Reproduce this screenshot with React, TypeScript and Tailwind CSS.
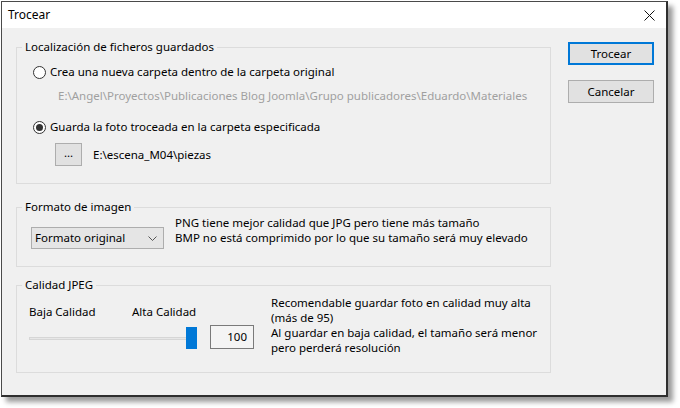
import React from "react";

const font = { fontFamily: '"Noto Sans", "Open Sans", sans-serif' };

const Radio = ({ checked }: { checked?: boolean }) => (
  <span className="flex h-[13px] w-[13px] shrink-0 items-center justify-center rounded-full border border-[#333333] bg-white">
    {checked && <span className="h-[7px] w-[7px] rounded-full bg-[#333333]"></span>}
  </span>
);

const GroupBox = ({
  title,
  className,
  children,
}: {
  title: string;
  className: string;
  children: React.ReactNode;
}) => (
  <fieldset className={`w-[535px] border border-[#dcdcdc] ${className}`}>
    <legend className="ml-[5px] px-[3px] leading-[16px]">{title}</legend>
    {children}
  </fieldset>
);

export default function App() {
  return (
    <div
      className="h-[408px] w-[680px] overflow-hidden bg-white pl-px pt-px text-[11.5px] text-black"
      style={font}
    >
      <div className="flex h-[396px] w-[667px] flex-col border border-[#4a4a4a] border-b-2 border-r-2 border-b-[#2e2e2e] border-r-[#2e2e2e] shadow-[5px_5px_5px_0px_rgba(0,0,0,0.4)]">
        {/* Title bar */}
        <div className="flex h-[26px] items-center justify-between bg-white pl-[6px] pr-[11px]">
          <span className="text-[12px]">Trocear</span>
          <svg width="11" height="11" viewBox="0 0 11 11" className="mt-[1px]">
            <path d="M0.5 0.5 L10.5 10.5 M10.5 0.5 L0.5 10.5" stroke="#111" strokeWidth="1" />
          </svg>
        </div>

        {/* Body */}
        <div className="flex flex-1 bg-[#f0f0f0] pl-[14px]">
          <div className="flex flex-col pt-[11px]">
            {/* Localización */}
            <GroupBox title="Localización de ficheros guardados" className="h-[145px]">
              <div className="flex flex-col pl-[16px]">
                <div className="mt-[9px] flex h-[16px] items-center gap-[4px]">
                  <Radio />
                  <span>Crea una nueva carpeta dentro de la carpeta original</span>
                </div>
                <div className="mt-[8px] h-[16px] pl-[25px] leading-[16px] text-[#a0a0a0]">
                  E:\Angel\Proyectos\Publicaciones Blog Joomla\Grupo publicadores\Eduardo\Materiales
                </div>
                <div className="mt-[15px] flex h-[16px] items-center gap-[4px]">
                  <Radio checked />
                  <span>Guarda la foto troceada en la carpeta especificada</span>
                </div>
                <div className="mt-[8px] flex items-center gap-[11px] pl-[22px]">
                  <button className="flex h-[23px] w-[27px] items-center justify-center border border-[#adadad] bg-[#e1e1e1] pb-[3px] leading-none">
                    ...
                  </button>
                  <span>E:\escena_M04\piezas</span>
                </div>
              </div>
            </GroupBox>

            {/* Formato */}
            <GroupBox title="Formato de imagen" className="mt-[15px] h-[68px]">
              <div className="flex items-start pl-[14px]">
                <div className="mt-[12px] flex h-[22px] w-[133px] items-center justify-between border border-[#adadad] bg-[#e5e5e5] pl-[3px] pr-[6px]">
                  <span>Formato original</span>
                  <svg width="9" height="5" viewBox="0 0 9 5">
                    <path d="M0.5 0.5 L4.5 4.5 L8.5 0.5" fill="none" stroke="#555" strokeWidth="1" />
                  </svg>
                </div>
                <div className="ml-[11px] leading-[15px]">
                  <div>PNG tiene mejor calidad que JPG pero tiene más tamaño</div>
                  <div>BMP no está comprimido por lo que su tamaño será muy elevado</div>
                </div>
              </div>
            </GroupBox>

            {/* Calidad JPEG */}
            <GroupBox title="Calidad JPEG" className="mt-[10px] h-[96px]">
              <div className="flex items-start pl-[12px]">
                <div className="flex w-[168px] flex-col">
                  <div className="mt-[11px] flex h-[16px] items-center">
                    <span className="w-[103px]">Baja Calidad</span>
                    <span>Alta Calidad</span>
                  </div>
                  <div className="relative mt-[7px] h-[22px] w-[168px]">
                    <div className="absolute left-0 right-0 top-[10px] h-[3px] border border-[#d6d6d6] bg-[#e7e7e7]"></div>
                    <div className="absolute right-0 top-0 h-[22px] w-[11px] bg-[#0078d7]"></div>
                  </div>
                </div>
                <div className="ml-[13px] mt-[32px] flex h-[24px] w-[44px] items-center justify-end border border-[#7a7a7a] bg-[#f4f4f4] pr-[6px]">
                  100
                </div>
                <div className="ml-[17px] mt-[2px] leading-[15px]">
                  <div>Recomendable guardar foto en calidad muy alta</div>
                  <div>(más de 95)</div>
                  <div>Al guardar en baja calidad, el tamaño será menor</div>
                  <div>pero perderá resolución</div>
                </div>
              </div>
            </GroupBox>
          </div>

          {/* Buttons */}
          <div className="ml-[17px] flex flex-col gap-[15px] pt-[14px]">
            <button className="h-[23px] w-[86px] border border-[#0078d7] bg-[#e1e1e1] shadow-[inset_0_0_0_1px_#0078d7]">
              Trocear
            </button>
            <button className="h-[23px] w-[86px] border border-[#adadad] bg-[#e1e1e1]">
              Cancelar
            </button>
          </div>
        </div>
      </div>
    </div>
  );
}
